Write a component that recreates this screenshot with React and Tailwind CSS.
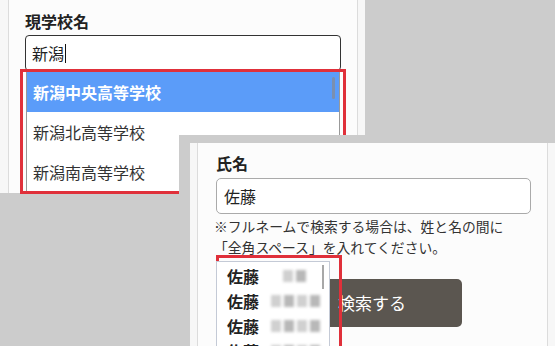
import React from "react";

const font = { fontFamily: '"Noto Sans CJK JP", "Noto Sans", sans-serif' };

const schools = ["新潟中央高等学校", "新潟北高等学校", "新潟南高等学校"];

const Blur = ({ w }) => (
    <div className="flex gap-[3px] blur-[1.5px]">
        {Array.from({ length: w }).map((_, i) => (
            <div key={i} className={i % 2 ? "w-[10px] h-[12px] bg-[#b8b8b8]" : "w-[10px] h-[12px] bg-[#d0d0d0]"} />
        ))}
    </div>
);

const App = () => {
    return (
        <div className="relative w-[555px] h-[346px] overflow-hidden bg-[#cccccc]" style={font}>
            {/* Screenshot 1: school search */}
            <div className="absolute left-0 top-0 w-[365px] h-[193px] bg-[#f7f7f7] overflow-hidden">
                <div className="ml-[8px] w-[350px] h-full border-x border-[#dcdcdc] bg-[#fcfcfc] pl-[16px] pt-[10px]">
                    <div className="text-[16px] font-bold text-[#222] leading-[22px]">現学校名</div>
                    <div className="mt-[3px] w-[316px] h-[36px] border border-[#333] rounded-[4px] bg-white flex items-center px-[6px] text-[16px] text-[#222]">
                        新潟<span className="ml-[1px] w-[1px] h-[19px] bg-[#111]" />
                    </div>
                    <div className="ml-[1px] w-[314px] border-x border-[#999] bg-white">
                        {schools.map((s, i) => (
                            <div
                                key={s}
                                className={
                                    i === 0
                                        ? "relative h-[41px] flex items-center px-[6px] text-[16px] font-bold text-white bg-[#5b9cf9]"
                                        : "h-[40px] flex items-center px-[6px] text-[16px] text-[#333]"
                                }
                            >
                                {s}
                                {i === 0 && <span className="absolute right-[4px] top-[6px] w-[3px] h-[22px] rounded bg-[#7b8fae]" />}
                            </div>
                        ))}
                    </div>
                </div>
            </div>
            <div className="absolute left-[20px] top-[69px] w-[326px] h-[125px] border-[3px] border-[#e0303a] pointer-events-none" />

            {/* Screenshot 2: name search */}
            <div className="absolute left-[179px] top-[135px] right-0 bottom-0 bg-[#cccccc] pl-[11px] pt-[8px]">
                <div className="w-full h-full bg-[#f7f7f7] pl-[7px]">
                    <div className="relative w-[351px] h-full border-x border-[#dcdcdc] bg-[#fcfcfc] pl-[18px] pt-[9px]">
                        <div className="text-[16px] font-bold text-[#222] leading-[22px]">氏名</div>
                        <div className="mt-[4px] w-[315px] h-[36px] border border-[#aaa] rounded-[5px] bg-white flex items-center px-[7px] text-[16px] text-[#222]">
                            佐藤
                        </div>
                        <p className="mt-[2px] text-[13.8px] leading-[21px] text-[#333] -ml-[2px]">
                            ※フルネームで検索する場合は、姓と名の間に
                            <br />
                            「全角スペース」を入れてください。
                        </p>
                        <div className="flex items-start">
                            <div className="relative z-10 mt-[3px] w-[114px] h-[100px] border border-[#c4cad6] bg-white pl-[10px] pt-[1px]">
                                {[2, 4, 4, 4].map((w, i) => (
                                    <div key={i} className="h-[25px] flex items-center gap-[12px] text-[16px] font-bold text-[#222]">
                                        <span>佐藤</span>
                                        <div className={i === 0 ? "ml-[12px]" : ""}>
                                            <Blur w={w} />
                                        </div>
                                    </div>
                                ))}
                                <span className="absolute right-[5px] top-[3px] w-[2px] h-[24px] bg-[#a8a8a8]" />
                            </div>
                            <button className="mt-[21px] -ml-[54px] w-[186px] h-[48px] rounded-[5px] bg-[#5b5650] text-white text-[17px] flex items-center justify-center pl-[6px]">
                                検索する
                            </button>
                        </div>
                    </div>
                </div>
            </div>
            <div className="absolute left-[216px] top-[255px] w-[126px] h-[100px] border-[3px] border-[#e0303a] pointer-events-none" />
        </div>
    );
};

export default App;
